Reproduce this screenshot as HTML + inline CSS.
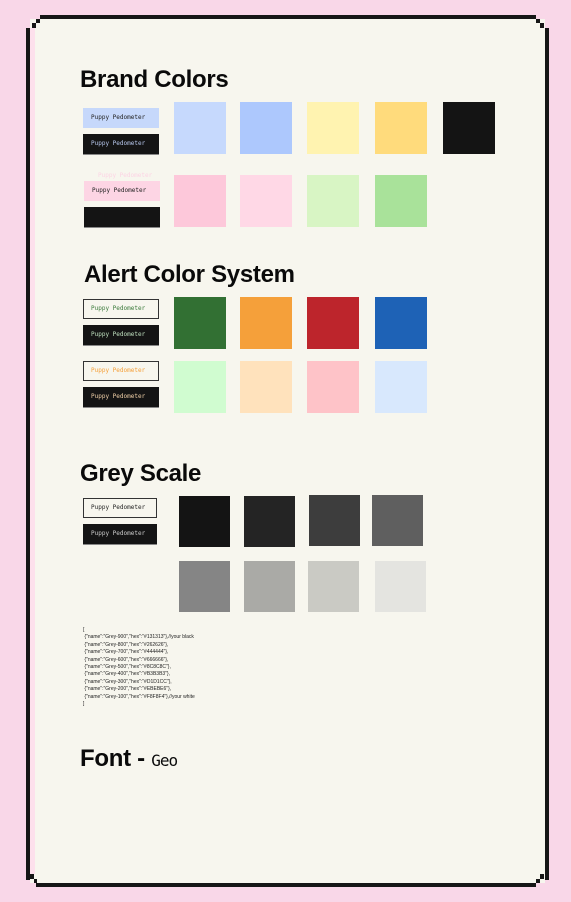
<!DOCTYPE html>
<html><head><meta charset="utf-8"><style>
*{margin:0;padding:0;box-sizing:border-box}
body{width:571px;height:902px;background:#f9d7e8;position:relative;overflow:hidden;font-family:"Liberation Sans",sans-serif}
.a{position:absolute}
.card{left:30px;top:19px;width:515px;height:864px;background:#f7f6ee}
.b{background:#161616;position:absolute}
h1{position:absolute;font-size:24px;font-weight:bold;color:#0a0a0a;letter-spacing:-0.3px;white-space:nowrap}
.sw{position:absolute;width:52px;height:52px}
.g{position:absolute;width:51px;height:51px}
.lb{position:absolute;width:76px;height:20px;font-family:"DejaVu Sans Mono","Liberation Mono",monospace;font-size:6px;line-height:20px;padding-left:8px;white-space:nowrap}
.dk{background:#141414;box-shadow:0 1px 0 #888}
.ol{border:1.5px solid #333;line-height:17px;padding-left:7px}
pre{position:absolute;left:83px;top:627px;font-family:"Liberation Sans",sans-serif;font-size:5px;line-height:7.4px;color:#222}
</style></head><body>
<div class="a card"></div>
<div class="b" style="left:40px;top:15px;width:496px;height:4px"></div>
<div class="b" style="left:36px;top:19px;width:4px;height:4px"></div>
<div class="b" style="left:32px;top:23px;width:4px;height:5px"></div>
<div class="b" style="left:26px;top:28px;width:4px;height:852px"></div>
<div class="b" style="left:536px;top:19px;width:4px;height:4px"></div>
<div class="b" style="left:540px;top:23px;width:4px;height:5px"></div>
<div class="b" style="left:545px;top:28px;width:4px;height:852px"></div>
<div class="b" style="left:30px;top:874px;width:4px;height:5px"></div>
<div class="b" style="left:34px;top:879px;width:3px;height:4px"></div>
<div class="b" style="left:36px;top:883px;width:455px;height:4px"></div>
<div class="b" style="left:540px;top:874px;width:4px;height:5px"></div>
<div class="b" style="left:536px;top:879px;width:4px;height:4px"></div>
<div class="b" style="left:490px;top:883px;width:46px;height:4px"></div>
<div class="a" style="left:30px;top:28px;width:5px;height:846px;background:#fde0ec"></div>

<h1 style="left:80px;top:66px">Brand Colors</h1>
<div class="lb" style="left:83px;top:108px;background:#c6d8fb;color:#222">Puppy Pedometer</div>
<div class="lb dk" style="left:83px;top:134px;color:#b8c8ee">Puppy Pedometer</div>
<div class="a" style="left:98px;top:172px;font-family:'DejaVu Sans Mono',monospace;font-size:6px;color:#fcd4e4">Puppy Pedometer</div>
<div class="lb" style="left:84px;top:181px;background:#fdd5e4;color:#222">Puppy Pedometer</div>
<div class="lb dk" style="left:84px;top:207px"></div>
<div class="sw" style="left:174px;top:102px;background:#c6d9fd"></div>
<div class="sw" style="left:240px;top:102px;background:#adc8fd"></div>
<div class="sw" style="left:307px;top:102px;background:#fff3b0"></div>
<div class="sw" style="left:375px;top:102px;background:#ffdb7c"></div>
<div class="sw" style="left:443px;top:102px;background:#141414"></div>
<div class="sw" style="left:174px;top:175px;background:#fdc8da"></div>
<div class="sw" style="left:240px;top:175px;background:#ffd8e6"></div>
<div class="sw" style="left:307px;top:175px;background:#d8f5c4"></div>
<div class="sw" style="left:375px;top:175px;background:#a9e29a"></div>

<h1 style="left:84px;top:261px">Alert Color System</h1>
<div class="lb ol" style="left:83px;top:299px;color:#3b7a3b">Puppy Pedometer</div>
<div class="lb dk" style="left:83px;top:325px;color:#bfe0bf">Puppy Pedometer</div>
<div class="lb ol" style="left:83px;top:361px;color:#f5a03a">Puppy Pedometer</div>
<div class="lb dk" style="left:83px;top:387px;color:#f0d0a8">Puppy Pedometer</div>
<div class="sw" style="left:174px;top:297px;background:#327033"></div>
<div class="sw" style="left:240px;top:297px;background:#f5a03a"></div>
<div class="sw" style="left:307px;top:297px;background:#bd252c"></div>
<div class="sw" style="left:375px;top:297px;background:#1e62b6"></div>
<div class="sw" style="left:174px;top:361px;background:#d0fcd0"></div>
<div class="sw" style="left:240px;top:361px;background:#ffe2bc"></div>
<div class="sw" style="left:307px;top:361px;background:#fec3c8"></div>
<div class="sw" style="left:375px;top:361px;background:#d8e8fd"></div>

<h1 style="left:80px;top:460px">Grey Scale</h1>
<div class="lb ol" style="left:83px;top:498px;width:74px;color:#222">Puppy Pedometer</div>
<div class="lb dk" style="left:83px;top:524px;width:74px;color:#ccc">Puppy Pedometer</div>
<div class="g" style="left:179px;top:496px;background:#141414"></div>
<div class="g" style="left:244px;top:496px;background:#242424"></div>
<div class="g" style="left:309px;top:495px;background:#3d3d3d"></div>
<div class="g" style="left:372px;top:495px;background:#5f5f5f"></div>
<div class="g" style="left:179px;top:561px;background:#858585"></div>
<div class="g" style="left:244px;top:561px;background:#aaaaa6"></div>
<div class="g" style="left:308px;top:561px;background:#cacac4"></div>
<div class="g" style="left:375px;top:561px;background:#e4e4e0"></div>

<pre>[
 {"name":"Grey-900","hex":"#131313"},//your black
 {"name":"Grey-800","hex":"#262626"},
 {"name":"Grey-700","hex":"#444444"},
 {"name":"Grey-600","hex":"#666666"},
 {"name":"Grey-500","hex":"#8C8C8C"},
 {"name":"Grey-400","hex":"#B3B3B3"},
 {"name":"Grey-300","hex":"#D1D1CC"},
 {"name":"Grey-200","hex":"#EBEBE6"},
 {"name":"Grey-100","hex":"#F8F8F4"},//your white
]</pre>

<h1 style="left:80px;top:745px">Font - <span style="font-family:'DejaVu Sans Mono',monospace;font-weight:normal;font-size:16px;letter-spacing:-1px">Geo</span></h1>
</body></html>
